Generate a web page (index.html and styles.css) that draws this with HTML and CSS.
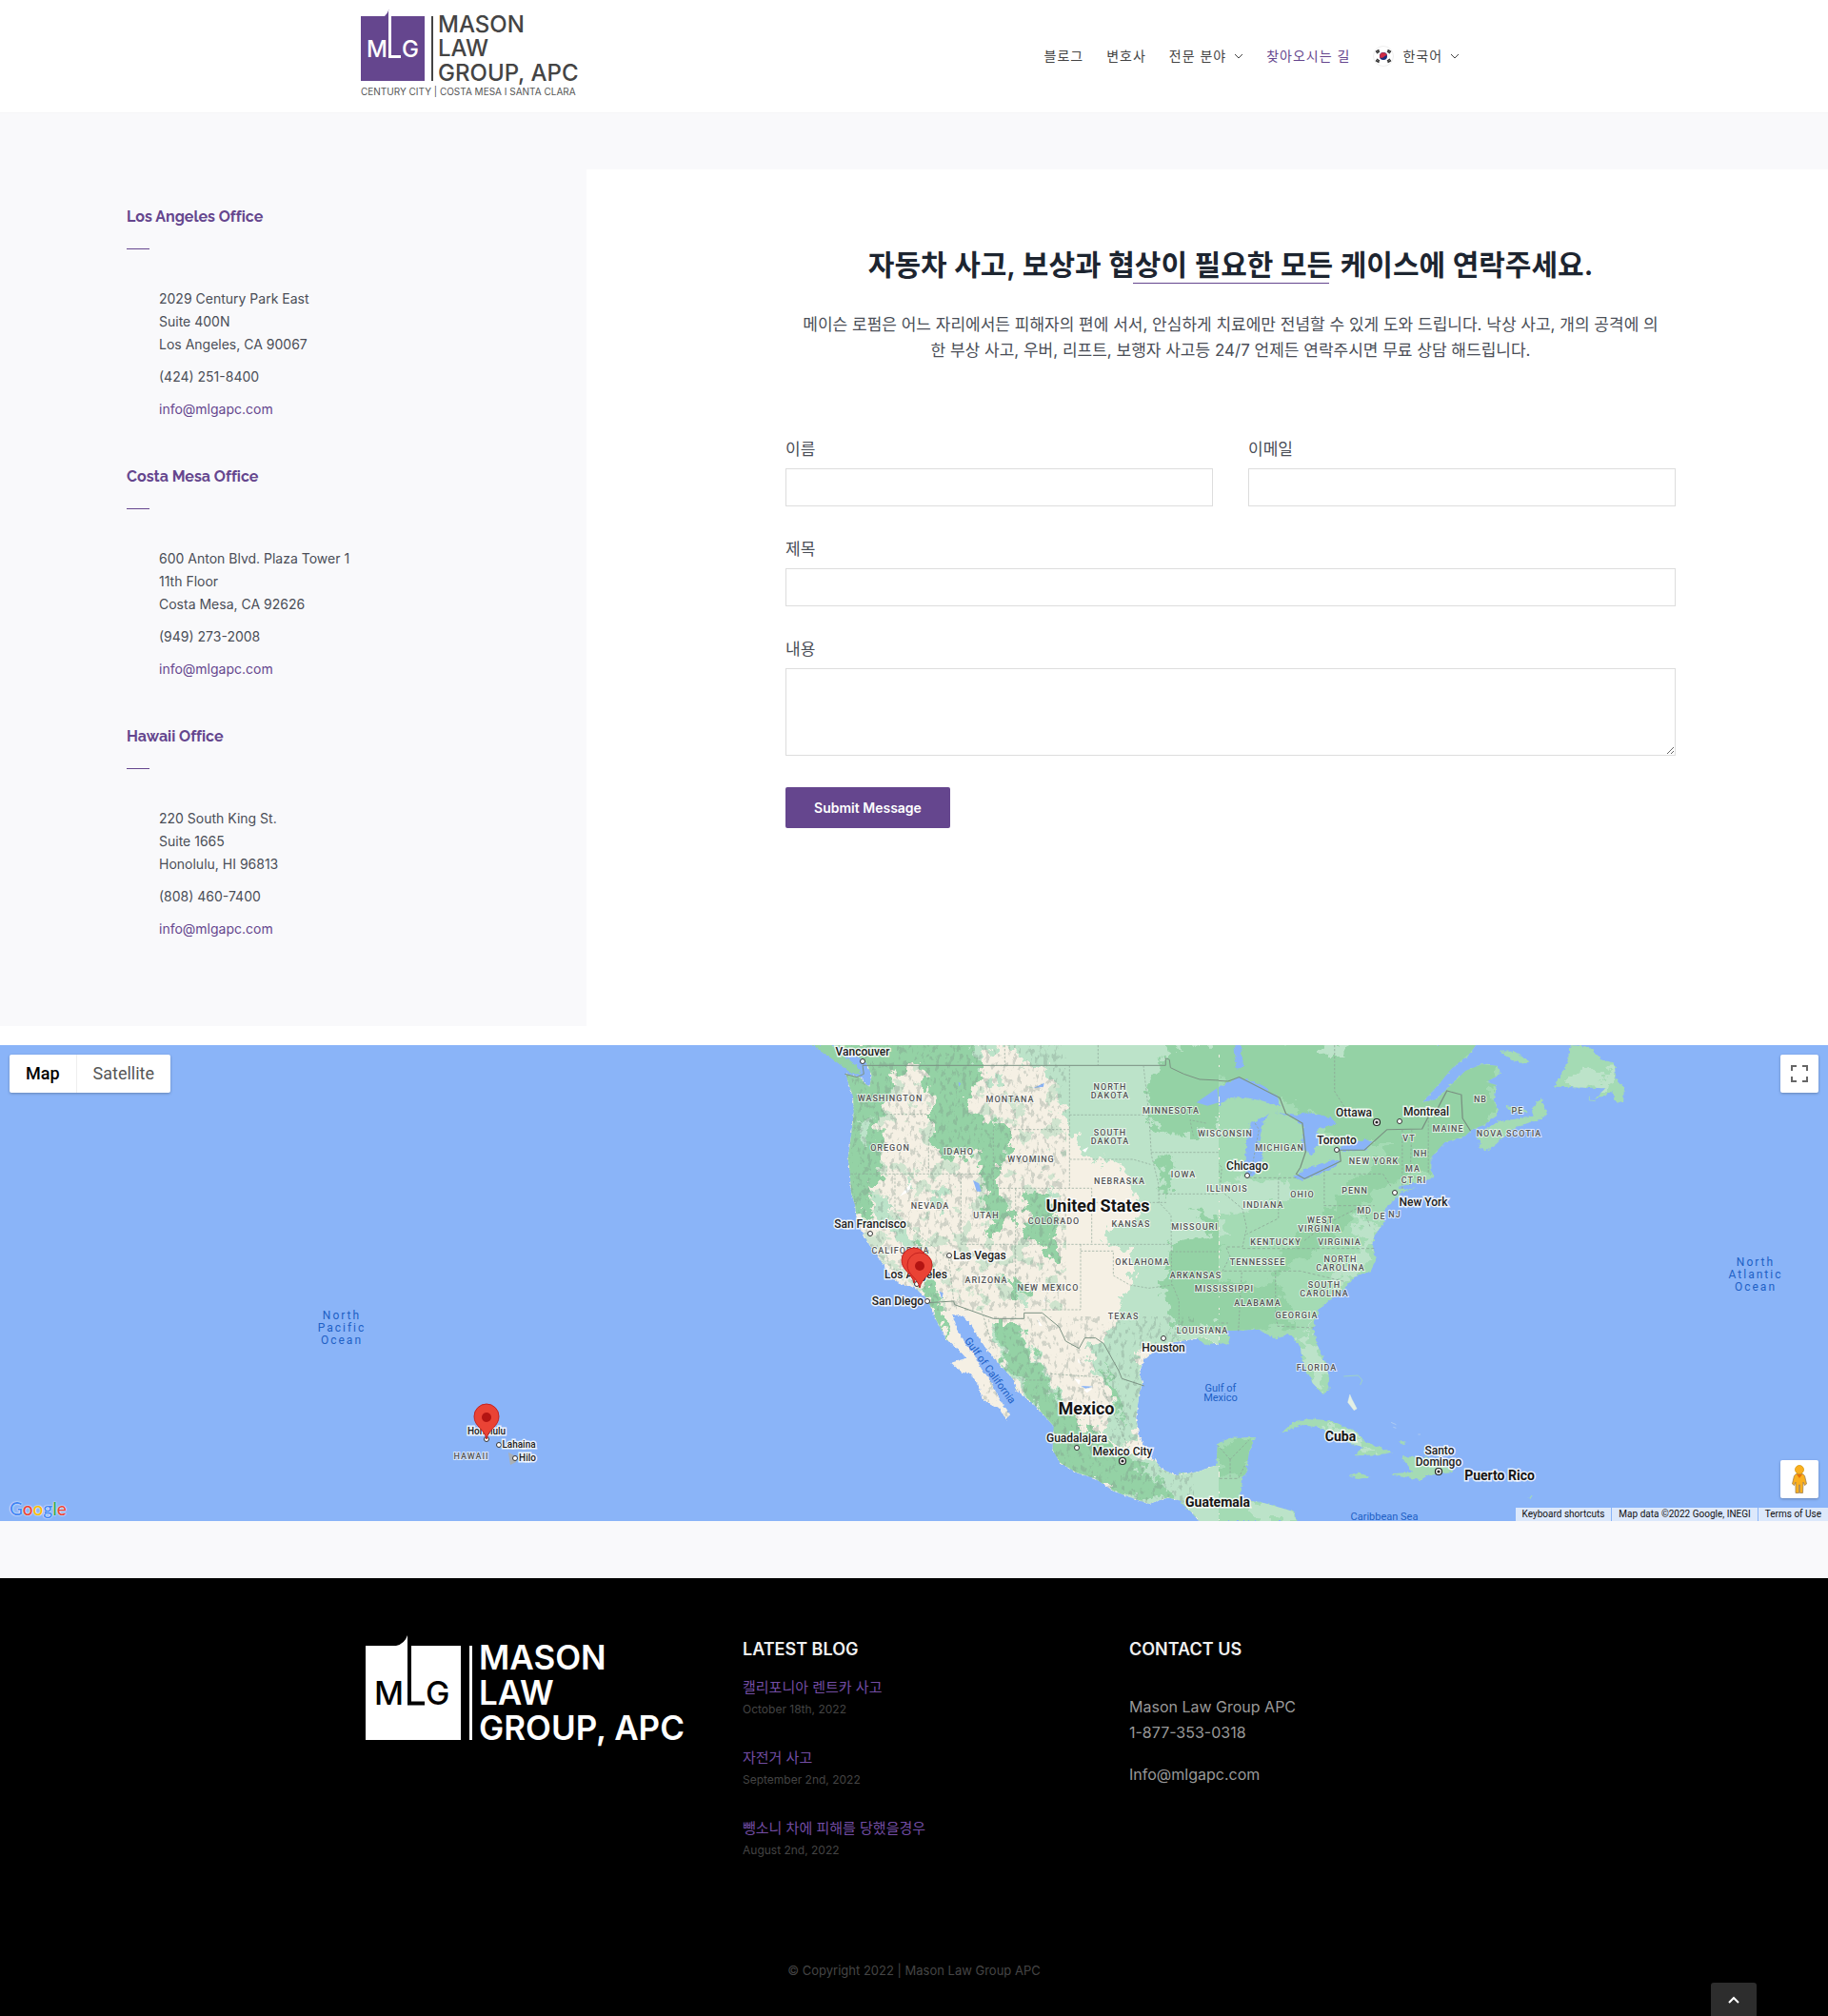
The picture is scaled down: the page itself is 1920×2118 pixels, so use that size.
FILE: index.html
```html
<!DOCTYPE html>
<html lang="ko">
<head>
<meta charset="utf-8">
<meta name="viewport" content="width=device-width, initial-scale=1">
<title>찾아오시는 길 | Mason Law Group APC</title>
<link rel="stylesheet" href="styles.css">
</head>
<body>
<header class="site-header">
  <div class="container header-inner">
    <a class="logo" href="#" aria-label="Mason Law Group, APC">
      <svg width="240" height="100" viewBox="0 0 240 100">
        <path class="brand" d="M0 7H25Q28 4 29.500 0V50H42V48H32V7H67V75H0Z"/>
        <path d="M30.500 1V49.500H42" fill="none" stroke="#fff" stroke-width="3"/>
        <rect x="74" y="7" width="2" height="68" fill="#444"/>
        <g class="logo-letters" fill="#fff" font-size="24"><text x="6" y="50">M</text><text x="43" y="50">G</text></g>
        <g class="logo-letters" fill="#444" font-size="24"><text x="81" y="24">MASON</text><text x="81" y="49">LAW</text><text x="81" y="75">GROUP, APC</text></g>
        <text class="logo-sub" x="0" y="90">CENTURY CITY | COSTA MESA I SANTA CLARA</text>
      </svg>
    </a>
    <nav class="main-nav">
      <a href="#">블로그</a>
      <a href="#">변호사</a>
      <a href="#">전문 분야 <svg class="chev" width="10" height="7" viewBox="0 0 10 7"><path d="M1 1l4 4 4-4"/></svg></a>
      <a class="active" href="#">찾아오시는 길</a>
      <a href="#"><svg class="flag" width="22" height="22" viewBox="0 0 22 22"><circle cx="11" cy="11" r="10.500" fill="#fff" stroke="#eee"/><circle cx="11" cy="11" r="4" fill="#1c2f7c"/><path d="M7.500 13A4 4 0 1 1 15 10.500C13 9.500 12 12 10.500 12.500 9.500 13 8.500 12.500 7.500 13Z" fill="#d02c45"/><path d="M3 6.500L6.500 4.500M4 8l3-2M15.500 4.500L19 6.500M15 6l3 2M3 15.500l3.500 2M4 14l3 2M15.500 17.500l3.500-2M15 16l3-2" stroke="#333" stroke-width="1.500"/></svg>한국어 <svg class="chev" width="10" height="7" viewBox="0 0 10 7"><path d="M1 1l4 4 4-4"/></svg></a>
    </nav>
  </div>
</header>

<main>
  <section class="contact">
    <aside class="offices">
      <section class="office">
        <h2>Los Angeles Office</h2>
        <address><p>2029 Century Park East<br>Suite 400N<br>Los Angeles, CA 90067</p><p>(424) 251-8400</p><p><a href="mailto:info@mlgapc.com">info@mlgapc.com</a></p></address>
      </section>
      <section class="office">
        <h2>Costa Mesa Office</h2>
        <address><p>600 Anton Blvd. Plaza Tower 1<br>11th Floor<br>Costa Mesa, CA 92626</p><p>(949) 273-2008</p><p><a href="mailto:info@mlgapc.com">info@mlgapc.com</a></p></address>
      </section>
      <section class="office">
        <h2>Hawaii Office</h2>
        <address><p>220 South King St.<br>Suite 1665<br>Honolulu, HI 96813</p><p>(808) 460-7400</p><p><a href="mailto:info@mlgapc.com">info@mlgapc.com</a></p></address>
      </section>
    </aside>
    <div class="form-panel">
      <h1>자동차 사고, 보상과 협상이 필요한 모든 케이스에 연락주세요.</h1>
      <p class="intro">메이슨 로펌은 어느 자리에서든 피해자의 편에 서서, 안심하게 치료에만 전념할 수 있게 도와 드립니다. 낙상 사고, 개의 공격에 의<br>한 부상 사고, 우버, 리프트, 보행자 사고등 24/7 언제든 연락주시면 무료 상담 해드립니다.</p>
      <form class="contact-form">
        <div class="field"><label for="name">이름</label><input id="name" type="text"></div>
        <div class="field"><label for="email">이메일</label><input id="email" type="email"></div>
        <div class="field wide"><label for="subject">제목</label><input id="subject" type="text"></div>
        <div class="field wide"><label for="message">내용</label><textarea id="message"></textarea></div>
        <button class="submit" type="submit">Submit Message</button>
      </form>
    </div>
  </section>

  <section class="map" aria-label="Map">
    <svg class="map-canvas" viewBox="0 0 1920 500" preserveAspectRatio="xMidYMid slice">
      <defs>
        <filter id="rough" x="-5%" y="-5%" width="110%" height="110%"><feTurbulence type="fractalNoise" baseFrequency=".03" numOctaves="4" seed="3"/><feDisplacementMap in="SourceGraphic" scale="80" xChannelSelector="R" yChannelSelector="G"/></filter>
        <filter id="coast" x="-5%" y="-5%" width="110%" height="110%"><feTurbulence type="fractalNoise" baseFrequency=".09" numOctaves="3" seed="8"/><feDisplacementMap in="SourceGraphic" scale="14" xChannelSelector="R" yChannelSelector="G"/></filter>
        <filter id="relief" x="0" y="0" width="100%" height="100%"><feTurbulence type="fractalNoise" baseFrequency=".07 .04" numOctaves="4" seed="5"/><feColorMatrix type="matrix" values="0 0 0 0 .2  0 0 0 0 .28  0 0 0 0 .24  9 0 0 0 -5"/></filter>
        <filter id="patches" x="0" y="0" width="100%" height="100%"><feTurbulence type="fractalNoise" baseFrequency=".018" numOctaves="5" seed="21"/><feColorMatrix type="matrix" values="0 0 0 0 .44  0 0 0 0 .71  0 0 0 0 .51  30 0 0 0 -17.500"/></filter>
        <path id="west" d="M165 24L230 50 270 80 287 120 280 155 265 145 250 125 205 115 215 150 228 185 230 240 222 310 212 380 218 425 222 490 235 530 240 580 270 640 290 670 320 710 350 755 380 780 420 785 445 810 465 830 480 870 500 910 520 950 560 985 585 1010 537 1025 570 1055 600 1060 625 1100 635 1140 690 1170 712 1208 722 1185 700 1155 685 1130 660 1080 630 1040 610 1000 580 960 555 920 540 872 575 878 600 905 620 940 650 985 690 1030 735 1080 740 1110 780 1140 820 1180 860 1225 857 1300 880 1340 930 1370 990 1390 1050 1430 1160 1470 1220 1450 1260 1460 1300 1500 1320 1524H1380V1350L1365 1350 1310 1370 1245 1380 1200 1360 1170 1320 1130 1260 1120 1200 1130 1120 1140 1090 1130 1060 1145 1015 1190 975 1240 960 1300 950 1330 942 1380 970V24Z"/>
        <path id="east" d="M-10 24V950L40 945 60 970 95 960 115 970 120 940 100 925 190 920 230 950 265 935 290 975 295 1020 320 1090 345 1125 358 1110 360 1070 345 1010 325 950 322 900 340 850 390 800 420 755 460 735 473 700 465 650 470 620 490 590 495 540 520 510 530 490 570 475 540 480 525 470 600 450 615 440 605 420 605 380 640 330 690 310 705 290 735 275 770 240 760 200 765 150 740 140 775 115 770 90 730 85 690 105 655 150 620 195 585 205 630 140 655 100 700 50 715 24Z"/>
        <path id="isles" d="M725 350L720 300 770 265 850 250 880 235 885 250 800 290 765 335 740 358ZM850 225L875 190 887 240 855 250ZM785 215L830 225 843 235 800 235ZM770 42L810 45 845 75 835 85 800 70ZM945 24L990 30 1020 70 1050 80 1055 130 1075 160 1070 205 1050 200 1048 170 1000 195 1030 160 905 155 930 100ZM243 1248L270 1215 310 1200 370 1210 420 1240 450 1275 512 1308 480 1315 425 1318 440 1290 390 1270 340 1230 290 1220ZM535 1320L600 1325 640 1350 665 1370 600 1380 580 1395 510 1375 560 1370ZM405 1380L430 1370 460 1385 430 1392ZM528 1277L545 1272 540 1282ZM838 1450L852 1446 850 1454ZM-5 1370L60 1375 85 1370 90 1280 120 1262 180 1260 165 1310 160 1370 150 1390 145 1450 210 1470 275 1495 280 1524 46 1524 0 1465Z"/>
        <clipPath id="clipWest"><use href="#west"/></clipPath>
        <clipPath id="clipEast"><use href="#east"/></clipPath>
        <clipPath id="clipIsles"><use href="#isles"/></clipPath>
        <g id="ring"><circle r="2.500" fill="#fff" stroke="#333"/></g>
        <g id="capital"><circle r="3.500" fill="#fff" stroke="#222" stroke-width="1.200"/><circle r="1.600" fill="#222"/></g>
        <g id="pin"><path d="M0 0C-2-11-13-13-13-24A13 13 0 0 1 13-24C13-13 2-11 0 0Z" fill="#ea4335" stroke="#c5221f"/><circle cy="-23" r="5" fill="#b31412"/></g>
      </defs>
      <rect width="1920" height="500" fill="#8ab4f8"/>
      <g transform="translate(1240 -8) scale(.43367 .33333)">
        <g filter="url(#coast)"><use href="#east" fill="#a4dbb4"/><use href="#isles" fill="#a4dbb4"/></g>
        <g clip-path="url(#clipEast)">
          <g filter="url(#rough)">
            <path fill="#94d2a5" d="M-20 0H760V330L600 430 520 330 380 330 280 220 100 120-20 200ZM530 320L600 330 560 440 470 480 380 620 250 740 210 720 330 600 420 450ZM-20 600L60 620 100 660 40 740-20 760ZM-20 830L60 780 230 770 280 900-20 940Z"/>
            <path fill="#bce3c9" d="M-20 220L60 260 80 320 20 360ZM20 440L160 450 260 440 270 500 150 560 60 540-20 520ZM-20 540L100 580 110 620-20 600ZM320 880L310 960 360 1050 340 1130 290 1000ZM430 560L470 600 460 700 390 790 350 780 440 660ZM60 760L90 760 50 900 30 850ZM340 10L400 20 400 60 360 60Z"/>
          </g>
          <g fill="#8ab4f8" filter="url(#coast)"><path d="M40 205L100 150 140 125 200 150 235 190 240 215 200 200 160 190 120 190 90 215 60 200ZM170 270L215 240 200 265 190 330 200 380 185 430 165 440 155 400 160 330ZM225 235L280 245 310 235 370 255 375 275 330 290 335 330 320 370 295 350 298 280 270 250ZM275 440L300 415 370 385 388 390 370 410 320 440 290 450ZM378 352L400 335 450 320 465 330 445 355 395 360ZM130 24L148 24 145 60 155 90 135 100Z"/></g>
          <path class="border" d="M0 112L50 115 75 135 115 138 142 125 240 190 255 240 295 270 303 360 290 410 280 430 300 445 388 390 385 355 445 355 500 290 585 288 600 250 620 230 645 168 680 180 683 255 705 300"/>
        </g>
        <g clip-path="url(#clipIsles)"><g filter="url(#rough)"><path fill="#bce3c9" d="M945 110L1040 100 1030 170 930 150ZM330 1215L420 1250 480 1310 430 1300ZM-10 1380L60 1450 50 1524ZM150 1460H280V1524H190Z"/><path fill="#94d2a5" d="M90 1270L180 1260 150 1380 90 1390Z"/></g></g>
        <path class="state" d="M373 24V170L400 225M0 360H70L100 410 95 480 150 540 160 600 150 660H110L120 690 100 740H0M0 493H95M165 442H237V570L160 620M237 442H280M348 420V530H470M370 430H490L510 470M150 665H470M105 736H290L400 770M148 740L140 925M230 740V870L235 910 322 915M0 817H70L60 900H115M537 290V480M560 290L555 470M600 250V430M300 640L350 590 440 530 460 600M180 270L190 290 170 430M25 230L30 270 70 330 95 430M120 1330L90 1285M120 1330L165 1270M120 1330V1390M70 1390H140L155 1350"/>
        <path d="M410 1125L405 1150 420 1175 427 1170 415 1140ZM510 1213L522 1220M515 1228L522 1231M575 1251H581" fill="#e4f0e4" stroke="#e4f0e4"/>
        <path d="M395 1068L430 1065 440 1080 435 1095M990 185V198L1005 200" fill="none" stroke="#a4dbb4" stroke-width="2"/>
      </g>
      <g transform="translate(820 -8) scale(.33333)">
        <path d="M100 24L170 24 195 55 235 85 255 115 225 115 200 95 160 65Z" fill="#94d2a5" filter="url(#coast)"/>
        <use href="#west" fill="#f5f0e4" filter="url(#coast)"/>
        <g clip-path="url(#clipWest)">
          <path d="M220 90H900V640L720 700 700 860H480L260 640Z" filter="url(#patches)" opacity=".55"/>
          <g filter="url(#rough)">
            <path fill="#bce3c9" d="M570 0H1400V990H1120L1160 1110 1100 1290 1000 1250 1060 1140 1000 1060 960 960 1010 970 1040 910 1110 760 1110 670 1010 640 1060 590 1130 560 1080 400 960 380 890 230 840 100 700 110 720 50 640 90 600 110ZM270 490L340 500 370 600 430 640 410 700 330 600ZM660 900L740 900 830 1040 880 1150 960 1240 960 1320 820 1180 720 1080 680 980ZM1020 1270L1180 1340 1420 1300V1560H1200L1000 1400Z"/>
            <path fill="#f5f0e4" d="M640 60L700 20 760 60 740 100 840 90 830 150 700 180 610 150Z"/>
            <path fill="#94d2a5" d="M150 0H590L640 130 600 160 580 250 500 350 480 200 430 80 360 110 340 180 310 240 320 420 290 480 270 500 290 600 200 520 190 100ZM480 220L550 150 600 250 720 280 720 350 680 400 640 350 520 380 480 330ZM620 360L690 360 690 500 740 560 660 640 640 520ZM760 480L850 490 880 590 850 640 890 680 860 720 830 660 760 640 780 560ZM420 640L470 680 500 840 540 960 490 900 450 780ZM680 900L740 900 820 1040 870 1150 1000 1260 1090 1320 1200 1380 1240 1460 1100 1450 850 1360 840 1210 760 1090 700 1020ZM1010 1020L1060 1110 1080 1230 1050 1140ZM1180 380L1240 390 1210 500ZM1230 20H1400V260L1290 320 1170 280 1150 160ZM1240 650L1390 620V900L1240 930 1200 780ZM700 760L790 790 740 830ZM1290 540L1390 570V640Z"/>
            <path fill="#bce3c9" d="M250 260L290 250 270 340 250 350ZM480 480L520 500 500 560ZM1150 1330L1200 1400 1130 1380ZM980 970L1020 1000 1000 1060ZM740 820L780 820 770 840ZM400 440L430 430 410 480ZM660 120L700 130 670 160ZM840 470L880 500 860 530Z"/>
          </g>
          <path fill="#8ab4f8" d="M606 450L625 460 632 485 618 485ZM795 160L830 143 828 155ZM1375 160L1310 205 1345 215 1380 205ZM560 140L568 145 562 155ZM500 800L512 805 508 825ZM946 1098L985 1100 960 1106Z"/>
          <path fill="#fff" d="M375 500L413 455 405 485ZM828 830L838 810 832 835ZM808 885L825 910 815 908ZM950 355L970 345 960 362ZM925 1075L945 1080 940 1095ZM955 1110L985 1105 965 1120ZM935 1010L950 1030 938 1025Z"/>
          <path d="M180 0H620L700 300 850 480 900 700 700 640 560 860 440 800 200 500Z" filter="url(#relief)" opacity=".3"/>
          <path d="M660 880L980 940 1100 1200 1300 1400V1524H1100L640 1200Z" filter="url(#relief)" opacity=".3"/>
        </g>
        <path class="border" d="M202 115L240 125 262 115 258 88H1213V65L1225 70 1228 95 1270 115 1320 132 1380 135M462 836L545 831 548 842 670 886H767V868H824L877 912 898 957 940 980 958 947H992L1018 965 1065 1050 1075 1075 1145 1098"/>
        <path class="state" d="M706 24V88M1000 24V88M910 88V475M910 244H1145M1143 88L1160 240 1168 370 1190 460 1192 520 1230 560 1232 780M735 290H910M670 290V475H980V652M910 384H1110L1165 400M320 242H460L480 270 466 320V430M220 430H670M360 430V560L530 700 545 830M568 430V652M568 652H1232M740 475V885M945 652V858H828M945 673H1048V750L1100 780 1160 790 1235 780 1255 830V930M980 520H1215M1168 362H1380M1190 493H1380M1232 675H1380M850 1060L1000 1070 1030 1140 1090 1280M630 850L670 980M700 1020L760 1080 850 1080M1340 270L1290 260 1300 310"/>
      </g>
      <path d="M534 428l8 4v6l-6 3z" fill="#aab0b5"/>
      <g>
        <use href="#ring" x="906" y="17"/><use href="#ring" x="914" y="198"/><use href="#ring" x="997" y="221"/><use href="#ring" x="963" y="251"/><use href="#ring" x="974" y="269"/><use href="#ring" x="1222" y="308"/><use href="#ring" x="1131" y="423"/><use href="#ring" x="1310" y="137"/><use href="#ring" x="1404" y="110"/><use href="#ring" x="1470" y="80"/><use href="#ring" x="1465" y="155"/><use href="#ring" x="511" y="414"/><use href="#ring" x="524" y="420"/><use href="#ring" x="541" y="434"/>
        <use href="#capital" x="1179" y="437"/><use href="#capital" x="1446" y="81"/><use href="#capital" x="1511" y="448"/>
      </g>
      <g class="states">
        <text x="935" y="59">WASHINGTON</text><text x="1061" y="60">MONTANA</text><text x="1166" y="47">NORTH</text><text x="1166" y="56">DAKOTA</text><text x="1230" y="72">MINNESOTA</text><text x="1166" y="95">SOUTH</text><text x="1166" y="104">DAKOTA</text><text x="935" y="111">OREGON</text><text x="1007" y="115">IDAHO</text><text x="1083" y="123">WYOMING</text><text x="1176" y="146">NEBRASKA</text><text x="1243" y="139">IOWA</text><text x="977" y="172">NEVADA</text><text x="1036" y="182">UTAH</text><text x="1107" y="188">COLORADO</text><text x="1188" y="191">KANSAS</text><text x="1255" y="194">MISSOURI</text><text x="946" y="219">CALIFORNIA</text><text x="1036" y="250">ARIZONA</text><text x="1101" y="258">NEW MEXICO</text><text x="1200" y="231">OKLAHOMA</text><text x="1256" y="245">ARKANSAS</text><text x="1286" y="259">MISSISSIPPI</text><text x="1180" y="288">TEXAS</text><text x="1263" y="303">LOUISIANA</text>
        <text x="1287" y="96">WISCONSIN</text><text x="1344" y="111">MICHIGAN</text><text x="1289" y="154">ILLINOIS</text><text x="1327" y="171">INDIANA</text><text x="1368" y="160">OHIO</text><text x="1423" y="156">PENN</text><text x="1443" y="125">NEW YORK</text><text x="1555" y="60">NB</text><text x="1594" y="72">PE</text><text x="1521" y="91">MAINE</text><text x="1585" y="96">NOVA SCOTIA</text><text x="1480" y="101">VT</text><text x="1492" y="117">NH</text><text x="1484" y="133">MA</text><text x="1485" y="145">CT RI</text><text x="1433" y="177">MD</text><text x="1449" y="183">DE</text><text x="1465" y="181">NJ</text><text x="1387" y="187">WEST</text><text x="1386" y="196">VIRGINIA</text><text x="1340" y="210">KENTUCKY</text><text x="1407" y="210">VIRGINIA</text><text x="1321" y="231">TENNESSEE</text><text x="1408" y="228">NORTH</text><text x="1408" y="237">CAROLINA</text><text x="1391" y="255">SOUTH</text><text x="1391" y="264">CAROLINA</text><text x="1321" y="274">ALABAMA</text><text x="1362" y="287">GEORGIA</text><text x="1383" y="342">FLORIDA</text><text x="495" y="435">HAWAII</text>
      </g>
      <g class="cities">
        <text x="906" y="11">Vancouver</text><text x="914" y="192">San Francisco</text><text x="1029" y="225">Las Vegas</text><text x="962" y="245">Los Angeles</text><text x="943" y="273">San Diego</text><text x="1222" y="322">Houston</text><text x="1131" y="417">Guadalajara</text><text x="1179" y="431">Mexico City</text><text x="1310" y="131">Chicago</text><text x="1404" y="104">Toronto</text><text x="1422" y="75">Ottawa</text><text x="1498" y="74">Montreal</text><text x="1495" y="169">New York</text><text x="1512" y="430">Santo</text><text x="1511" y="442">Domingo</text>
      </g>
      <g class="cities small"><text x="511" y="409">Honolulu</text><text x="545" y="423">Lahaina</text><text x="554" y="437">Hilo</text></g>
      <g class="countries"><text x="1408" y="416">Cuba</text><text x="1575" y="457">Puerto Rico</text><text x="1279" y="485">Guatemala</text></g>
      <g class="countries large"><text x="1153" y="175">United States</text><text x="1141" y="388">Mexico</text></g>
      <g class="waters"><text x="1282" y="364">Gulf of</text><text x="1282" y="374">Mexico</text><text x="1454" y="499">Caribbean Sea</text><text x="1037" y="344" transform="rotate(54 1037 344)">Gulf of California</text></g>
      <g class="oceans"><text x="359" y="288">North</text><text x="359" y="301">Pacific</text><text x="359" y="314">Ocean</text><text x="1844" y="232">North</text><text x="1844" y="245">Atlantic</text><text x="1844" y="258">Ocean</text></g>
      <use href="#pin" x="960" y="250"/><use href="#pin" x="966" y="255"/><use href="#pin" x="511" y="414"/>
    </svg>
    <div class="map-types"><button type="button" class="current">Map</button><button type="button">Satellite</button></div>
    <button class="map-button fullscreen" type="button" aria-label="Toggle fullscreen view"><svg width="18" height="18" viewBox="0 0 18 18"><path d="M1 6V1H6M12 1h5V6M17 12v5H12M6 17H1V12" fill="none" stroke="#666" stroke-width="2"/></svg></button>
    <button class="map-button pegman" type="button" aria-label="Street View"><svg width="18" height="30" viewBox="0 0 18 30"><path d="M5.500 9.500H12.500L14.500 11.500 16.500 20 14.500 21.500 13 18 12.500 29.500H9.500V21H8.500V29.500H5L5 18 3.500 21.500 1.500 20 3.500 11.500Z" fill="#fbb01f" stroke="#a08050" stroke-width=".8"/><circle cx="9" cy="5" r="4.500" fill="#fbb01f" stroke="#d79b10" stroke-width=".8"/><path d="M6 10h6l-3 4z" fill="#e8710a"/></svg></button>
    <a class="google" href="#"><span class="blue">G</span><span class="red">o</span><span class="yellow">o</span><span class="blue">g</span><span class="green">l</span><span class="red">e</span></a>
    <div class="attribution"><button type="button">Keyboard shortcuts</button><span>Map data ©2022 Google, INEGI</span><a href="#">Terms of Use</a></div>
  </section>
</main>

<footer class="site-footer">
  <div class="container footer-columns">
    <a class="footer-logo" href="#" aria-label="Mason Law Group, APC">
      <svg width="345" height="120" viewBox="0 0 345 120">
        <path fill="#fff" d="M0 11H32Q41 9 44 0V73H62V70H48V11H100V110H0Z"/>
        <path d="M46 11V71.500H62" fill="none" stroke="#000" stroke-width="4"/>
        <rect x="109" y="11" width="3" height="99" fill="#fff"/>
        <g class="logo-letters" fill="#000" font-size="34"><text x="9" y="73">M</text><text x="63" y="73">G</text></g>
        <g class="logo-letters bold" fill="#fff" font-size="35"><text x="119" y="36">MASON</text><text x="119" y="73">LAW</text><text x="119" y="110">GROUP, APC</text></g>
      </svg>
    </a>
    <section class="blog">
      <h2>LATEST BLOG</h2>
      <article><a href="#">캘리포니아 렌트카 사고</a><time datetime="2022-10-18">October 18th, 2022</time></article>
      <article><a href="#">자전거 사고</a><time datetime="2022-09-02">September 2nd, 2022</time></article>
      <article><a href="#">뺑소니 차에 피해를 당했을경우</a><time datetime="2022-08-02">August 2nd, 2022</time></article>
    </section>
    <section class="footer-contact">
      <h2>CONTACT US</h2>
      <p>Mason Law Group APC<br>1-877-353-0318</p>
      <p>Info@mlgapc.com</p>
    </section>
  </div>
  <p class="copyright">© Copyright 2022 | Mason Law Group APC</p>
</footer>
<a class="to-top" href="#" aria-label="Go to top"><svg width="12" height="8" viewBox="0 0 12 8"><path d="M1 7l5-5 5 5" fill="none" stroke="#fff" stroke-width="2"/></svg></a>
</body>
</html>
```
FILE: styles.css
```css
* { box-sizing: border-box; }
body { margin: 0; background: #f9f9fb; color: #4a4e57; font: 14px/24px Inter, "Noto Sans CJK KR", sans-serif; }
h1, h2, p { margin: 0; }
a { color: #65468e; text-decoration: none; }
button, input, textarea { font: inherit; }
.container { width: 100%; max-width: 1170px; margin: 0 auto; }

.site-header { background: #fff; border-bottom: 1px solid #f5f5f7; }
.header-inner { display: flex; justify-content: space-between; padding: 10px 12px 8px 4px; }
.logo svg { display: block; }
.brand { fill: #65468e; }
.logo-letters { font-family: Inter, sans-serif; font-weight: 500; }
.logo-letters.bold { font-weight: 600; }
.logo-sub { font: 10px Inter, sans-serif; fill: #555; }
.main-nav { display: flex; gap: 24px; height: 98px; align-items: center; letter-spacing: 1px; }
.main-nav a { display: flex; align-items: center; color: #444; white-space: pre; }
.main-nav .active { color: #65468e; }
.chev { margin-left: 3px; fill: none; stroke: #444; }
.flag { margin-right: 9px; }

.contact { display: grid; grid-template-columns: 308fr 652fr; margin-top: 59px; min-height: 900px; }
.offices { padding: 38px 40px 48px 133px; display: flex; flex-direction: column; gap: 47px; }
.office h2 { color: #65468e; font: 700 16px/24px Raleway, Lato, sans-serif; font-variant-ligatures: none; }
.office h2::after { content: ""; display: block; width: 24px; height: 1px; margin-top: 21px; background: #65468e; }
.office address { margin: 40px 0 0 34px; font-style: normal; display: grid; gap: 10px; }
.form-panel { background: #fff; padding: 80px 160px 40px 209px; }
.form-panel h1 { color: #1d2530; text-align: center; font-size: 30px; line-height: 40px; font-weight: 600; }
.form-panel h1::after { content: ""; display: block; width: 206px; height: 1px; margin: -1px auto 0; background: #65468e; }
.intro { margin-top: 30px; text-align: center; font-size: 17px; line-height: 27px; }
.contact-form { display: grid; grid-template-columns: 1fr 1fr; gap: 29px 37px; margin-top: 74px; }
.field { display: flex; flex-direction: column; gap: 4px; }
.field label { font-size: 17px; line-height: 32px; }
.wide { grid-column: 1 / -1; }
.field input, .field textarea { width: 100%; height: 40px; padding: 8px; border: 1px solid #ddd; background: #fff; }
.field textarea { height: 92px; resize: vertical; }
.submit { width: 173px; height: 43px; margin-top: 4px; border: 0; border-radius: 2px; background: #65468e; color: #fff; font-weight: 600; }

.map { position: relative; height: 500px; box-shadow: 0 -20px #fff; margin-top: 20px; font-family: Roboto, sans-serif; }
.map-canvas { display: block; width: 100%; height: 100%; font-family: Roboto, sans-serif; }
.map-canvas text { text-anchor: middle; paint-order: stroke; }
.border { fill: none; stroke: #7a9182; stroke-width: 3; }
.state { fill: none; stroke: #8ca495; stroke-width: 2; stroke-dasharray: 7 5; }
.states { font-size: 9px; letter-spacing: 1px; fill: #555; font-weight: 500; stroke: #ffffffb0; stroke-width: 2px; }
.cities { font-size: 12px; font-weight: 500; fill: #222; stroke: #ffffffd0; stroke-width: 3px; }
.cities.small { font-size: 10px; }
.countries { font-size: 14px; font-weight: 700; fill: #151515; stroke: #ffffffd0; stroke-width: 3px; }
.countries.large { font-size: 18px; }
.waters { font-size: 11px; fill: #2060c5; }
.oceans { font-size: 12px; letter-spacing: 2px; fill: #2060c5; }
.map-types { position: absolute; left: 10px; top: 10px; display: flex; height: 40px; background: #fff; border-radius: 2px; box-shadow: 0 1px 3px #0004; }
.map-types button { border: 0; padding: 0 17px; background: none; color: #565656; font-size: 18px; }
.map-types .current { color: #000; font-weight: 500; border-right: 1px solid #eee; }
.map-button { position: absolute; right: 10px; width: 40px; height: 40px; padding: 0; border: 0; border-radius: 2px; background: #fff; display: grid; place-items: center; box-shadow: 0 1px 3px #0004; }
.fullscreen { top: 10px; }
.pegman { bottom: 24px; }
.google { position: absolute; left: 10px; bottom: 0; font: 500 19px/26px Lato, sans-serif; text-shadow: 0 0 2px #fff, 0 0 1px #fff; }
.blue { color: #4285f4; }
.red { color: #ea4335; }
.yellow { color: #fbbc04; }
.green { color: #34a853; }
.attribution { position: absolute; right: 0; bottom: 0; display: flex; gap: 1px; font-size: 10px; line-height: 14px; }
.attribution > * { border: 0; padding: 0 7px; background: #dce8fb; color: #111; }

.site-footer { margin-top: 60px; background: #000; padding: 59px 0 28px; }
.footer-columns { display: grid; grid-template-columns: 396px 406px 1fr; padding-left: 9px; min-height: 334px; }
.footer-logo { margin-top: 1px; }
.site-footer h2 { color: #f0f0f0; font-size: 18px; line-height: 32px; font-weight: 600; }
.blog article { display: grid; margin: 12px 0 29px; }
.blog article + article { margin-top: 0; }
.blog a { color: #734da5; font-size: 15px; line-height: 24px; }
.blog time { color: #444; font-size: 12px; line-height: 21px; }
.footer-contact { color: #999; font-size: 16px; line-height: 27px; }
.footer-contact p { margin: 31px 0 -14px; }
.footer-contact p + p { margin-top: 31px; }
.copyright { text-align: center; color: #454545; font-size: 13px; line-height: 39px; }
.to-top { position: fixed; right: 75px; bottom: 0; width: 48px; height: 35px; background: #2d2d2d; border-radius: 3px 3px 0 0; display: grid; place-items: center; }
```
